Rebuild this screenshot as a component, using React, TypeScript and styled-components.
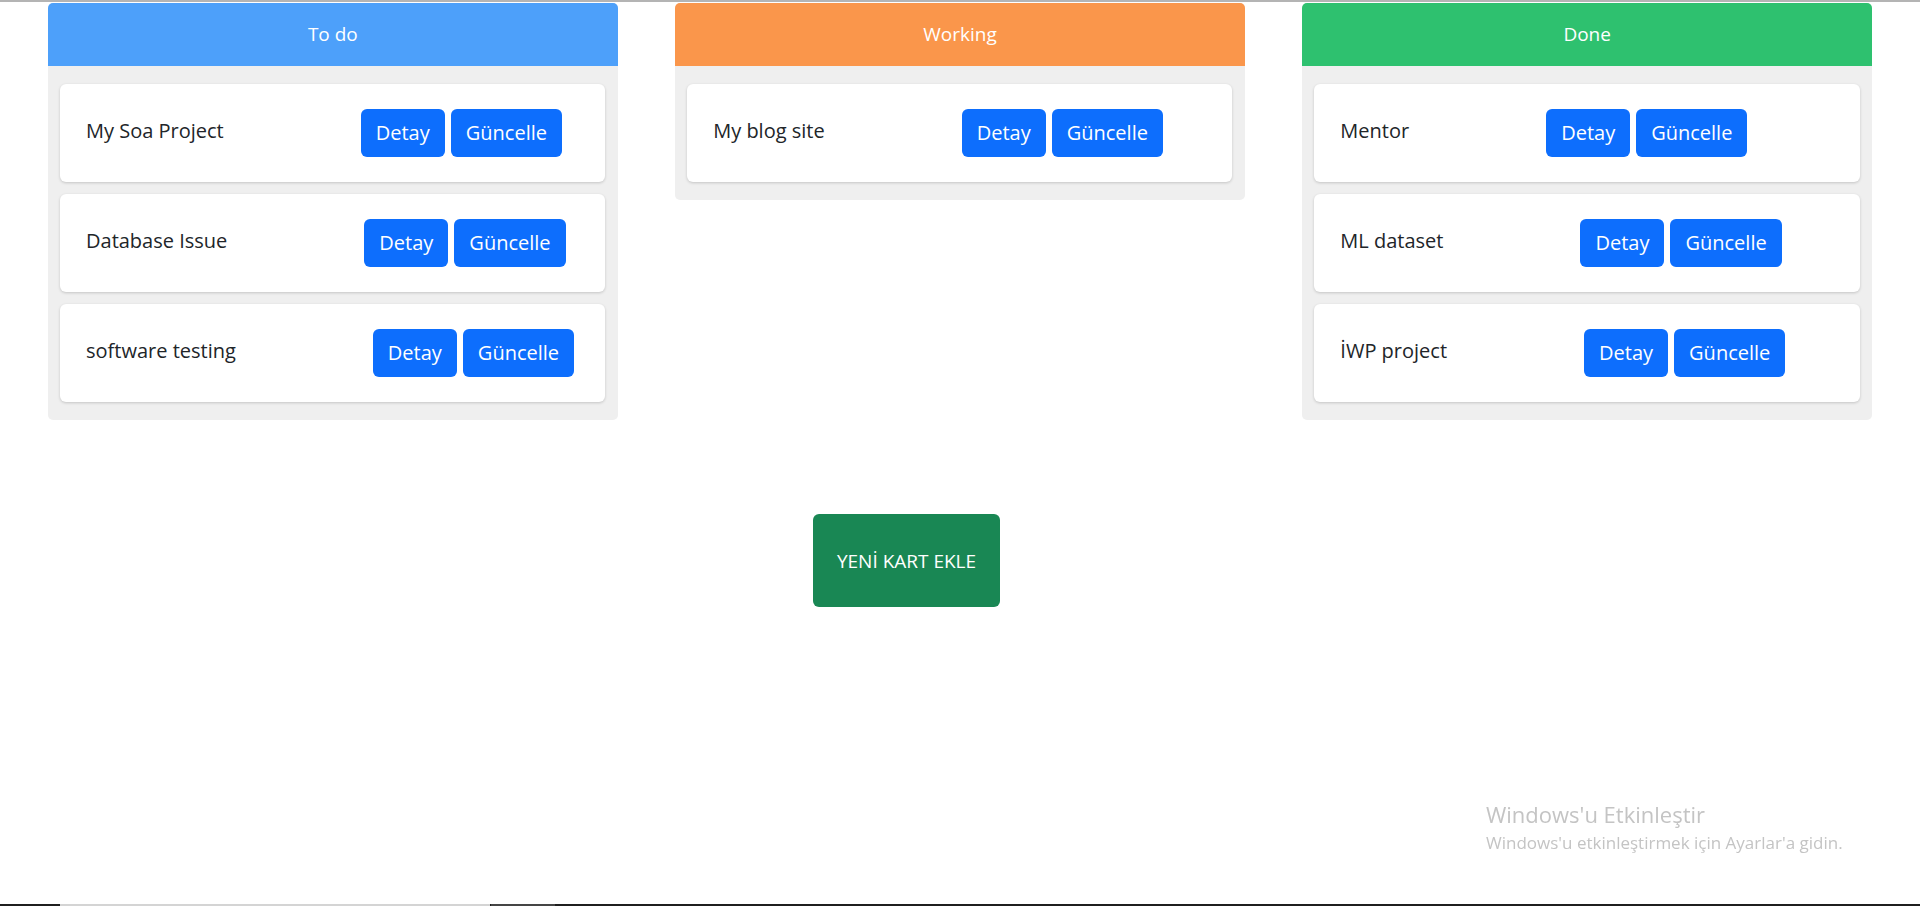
import React from "react";
import styled, { createGlobalStyle } from "styled-components";

const GlobalStyle = createGlobalStyle`
  html, body {
    margin: 0;
    padding: 0;
    background: #ffffff;
  }
  body {
    font-family: "Open Sans", "Noto Sans", sans-serif;
    color: #212529;
  }
  * { box-sizing: border-box; }
`;

const Page = styled.div`
  min-height: 100vh;
  display: flex;
  flex-direction: column;
`;

const TopRule = styled.div`
  height: 2px;
  background: #b4b4b4;
  margin-bottom: 1px;
`;

const Board = styled.main`
  display: flex;
  align-items: flex-start;
  gap: 57.5px;
  padding: 0 48px;
`;

const Column = styled.section`
  flex: 1 1 0;
  min-width: 0;
  background: #efefef;
  border-radius: 5px;
  padding-bottom: 18px;
  overflow: hidden;
`;

const ColumnHeader = styled.header<{ $color: string }>`
  height: 63px;
  background: ${(p) => p.$color};
  color: #ffffff;
  display: flex;
  align-items: center;
  justify-content: center;
  font-size: 19px;
  line-height: 1;
`;

const CardList = styled.div`
  display: flex;
  flex-direction: column;
  gap: 12px;
  padding: 18px 12.5px 0 12px;
`;

const TaskCard = styled.article`
  background: #ffffff;
  border-radius: 6px;
  box-shadow: 0 1px 3px rgba(0, 0, 0, 0.18);
  padding: 25px 26px;
  display: flex;
  align-items: center;
`;

const TaskTitle = styled.span`
  font-size: 20px;
  line-height: 30px;
  color: #212529;
  margin-bottom: 5px;
  white-space: nowrap;
`;

const Actions = styled.div`
  margin-left: 137px;
  display: flex;
  gap: 6px;
`;

const ActionButton = styled.button`
  background: #0d6efd;
  color: #ffffff;
  border: none;
  border-radius: 6px;
  padding: 9px 15px;
  font-family: inherit;
  font-size: 20px;
  line-height: 30px;
  cursor: pointer;
`;

const AddRow = styled.div`
  margin-top: 94px;
  padding-left: 813px;
`;

const AddButton = styled.button`
  width: 187px;
  height: 93px;
  background: #198754;
  color: #ffffff;
  border: none;
  border-radius: 6px;
  font-family: inherit;
  font-size: 19px;
  cursor: pointer;
`;

const Watermark = styled.div`
  position: fixed;
  left: 1486px;
  top: 798px;
  color: #c4c4c4;
  pointer-events: none;
`;

const WatermarkTitle = styled.div`
  font-size: 22px;
  line-height: 32px;
`;

const WatermarkText = styled.div`
  font-size: 17px;
  line-height: 26px;
`;

const Taskbar = styled.div`
  margin-top: auto;
  height: 2px;
  background: #1f1f1f;
  display: flex;
`;

const TaskbarSegment = styled.div<{ $width: number; $color: string; $offset: number }>`
  width: ${(p) => p.$width}px;
  margin-left: ${(p) => p.$offset}px;
  background: ${(p) => p.$color};
`;

type BoardColumn = { title: string; color: string; tasks: string[] };

const columns: BoardColumn[] = [
  { title: "To do", color: "#4da0fa", tasks: ["My Soa Project", "Database Issue", "software testing"] },
  { title: "Working", color: "#fa964b", tasks: ["My blog site"] },
  { title: "Done", color: "#2ec16f", tasks: ["Mentor", "ML dataset", "İWP project"] },
];

export default function App() {
  return (
    <>
      <GlobalStyle />
      <Page>
        <TopRule />
        <Board>
          {columns.map((col) => (
            <Column key={col.title}>
              <ColumnHeader $color={col.color}>{col.title}</ColumnHeader>
              <CardList>
                {col.tasks.map((t) => (
                  <TaskCard key={t}>
                    <TaskTitle>{t}</TaskTitle>
                    <Actions>
                      <ActionButton>Detay</ActionButton>
                      <ActionButton>Güncelle</ActionButton>
                    </Actions>
                  </TaskCard>
                ))}
              </CardList>
            </Column>
          ))}
        </Board>
        <AddRow>
          <AddButton>YENİ KART EKLE</AddButton>
        </AddRow>
        <Taskbar>
          <TaskbarSegment $offset={60} $width={430} $color="#d4d4d4" />
          <TaskbarSegment $offset={1} $width={64} $color="#454545" />
        </Taskbar>
        <Watermark>
          <WatermarkTitle>Windows'u Etkinleştir</WatermarkTitle>
          <WatermarkText>Windows'u etkinleştirmek için Ayarlar'a gidin.</WatermarkText>
        </Watermark>
      </Page>
    </>
  );
}
